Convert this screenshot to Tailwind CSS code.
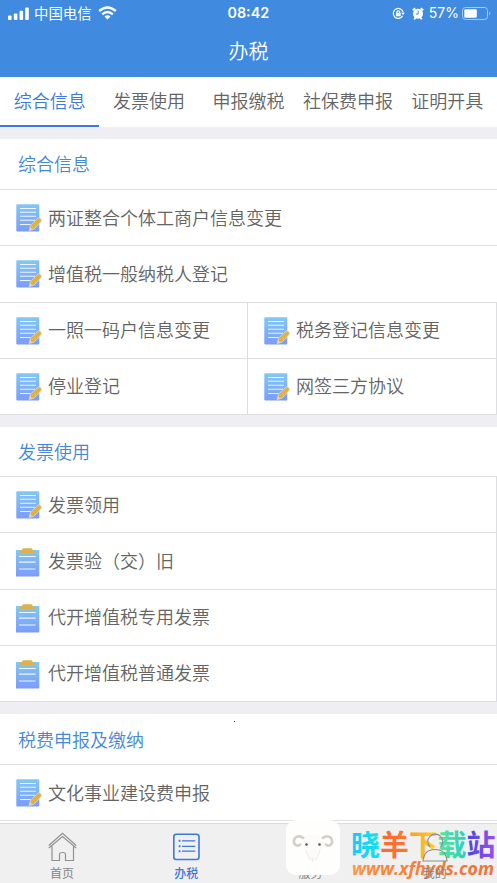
<!DOCTYPE html>
<html lang="zh-CN">
<head>
<meta charset="utf-8">
<title>办税</title>
<script src="https://cdn.jsdelivr.net/npm/@tailwindcss/browser@4"></script>
</head>
<body class="w-[497px] h-[883px] overflow-hidden bg-[#efeff3] font-['Noto_Sans_CJK_SC',sans-serif] font-[350] text-[#646464]">
<svg class="absolute w-0 h-0">
  <defs>
    <linearGradient id="paper" x1="0" y1="0" x2="0" y2="1"><stop offset="0" stop-color="#82c8f4"/><stop offset="1" stop-color="#7c9bfa"/></linearGradient>
    <symbol id="edit" viewBox="0 0 26 28">
      <rect x="0.3" y="0.3" width="23" height="27.2" rx="1" fill="url(#paper)"/>
      <path d="M4 4.500H20M4 8.200H20M4 12.200H20M4 16.200H19M4 20.500H14.500" stroke="#e9f5ff" stroke-width="1.100"/>
      <path d="M13.300 26.500L14.300 21.500L21.800 14.200Q23 13.300 24.700 14.500Q26 16 25 17.700L18 25Z" fill="#e3b13f" stroke="#d8e2ee" stroke-width=".7"/>
      <path d="M13.300 26.500l.7-3.200 2.600 2.200z" fill="#f4d692"/>
    </symbol>
    <symbol id="clip" viewBox="0 0 26 29">
      <path d="M0 2H23.300V28.500H0z" fill="url(#paper)"/>
      <path d="M3 8.500H19.500M3 14.200H19.500M3 21H19.500" stroke="#e9f5ff" stroke-width="1.200"/>
      <path d="M4 5.300V3.200Q4 2 5.500 2H6Q6.300.3 7.500.3H15Q16.300.3 16.700 2H17Q18.500 2 18.500 3.200V5.300z" fill="#dcb34b"/>
    </symbol>
  </defs>
</svg>

<header class="h-[77px] bg-[#408ae0] text-white flex flex-col">
  <div class="h-[26px] relative flex items-center justify-between pl-2 pr-1.5">
    <div class="flex items-center">
      <svg class="w-[21px] h-[13px]" viewBox="0 0 21 13" fill="#fff"><rect x="0" y="8.500" width="3.600" height="4.500" rx="1"/><rect x="5.800" y="6.500" width="3.600" height="6.500" rx="1"/><rect x="11.500" y="3.700" width="3.600" height="9.300" rx="1"/><rect x="17.200" y="0.500" width="3.600" height="12.500" rx="1"/></svg>
      <span class="ml-[5px] text-[14.400px] leading-[26px] font-normal">中国电信</span>
      <svg class="ml-[6px] w-[19px] h-[14px]" viewBox="0 0 19 14" fill="none" stroke="#fff" stroke-width="2.400"><path d="M1.200 5Q9.500-2.200 17.800 5"/><path d="M4.200 8.400Q9.500 3.700 14.800 8.400"/><path d="M6.500 10.500Q9.500 8 12.500 10.500L9.500 13.500z" fill="#fff" stroke="none"/></svg>
    </div>
    <span class="absolute left-[227.500px] top-0 leading-[26px] text-[14.300px] font-semibold font-[Inter,sans-serif]">08:42</span>
    <div class="flex items-center">
      <svg class="w-[13px] h-[13px]" viewBox="0 0 13 13" fill="none" stroke="#fff" stroke-width="1.200"><path d="M10.700 8.800A5 5 0 1 1 11.200 5.500"/><path d="M9.200 5.700h3.600l-1.800 2.400z" fill="#fff" stroke="none"/><rect x="3.900" y="5.700" width="4.800" height="3.600" rx=".4" fill="#fff" stroke="none"/><path d="M4.900 6V4.800Q6.300 2.700 7.700 4.800V6"/></svg>
      <svg class="ml-[7px] w-[12px] h-[13px]" viewBox="0 0 12 13" fill="none" stroke="#fff"><circle cx="6" cy="6.800" r="5" fill="#fff" stroke="none"/><path d="M.8 3.300L3.200 1.200M11.200 3.300L8.800 1.200M2.200 12.300l1.500-1.800M9.800 12.300l-1.500-1.800" stroke-width="1.800"/><path d="M6.200 3.800V7H3.800" stroke="#408ae0" stroke-width="1"/></svg>
      <span class="ml-[5px] leading-[26px] text-[14px] font-normal font-[Inter,sans-serif]">57%</span>
      <svg class="ml-[3px] w-[29px] h-[13px]" viewBox="0 0 29 13"><rect x=".5" y=".5" width="25" height="12" rx="3" fill="none" stroke="#a7cbf3"/><rect x="2.300" y="2.200" width="12.500" height="8.600" rx="1.300" fill="#fff"/><path d="M27.300 4.500Q29.300 6.500 27.300 8.500z" fill="#a7cbf3"/></svg>
    </div>
  </div>
  <h1 class="h-[51px] text-center text-[20px] leading-[49px]">办税</h1>
</header>

<nav class="h-[50px] bg-white grid grid-cols-5 text-center text-[18px] leading-[47px] whitespace-nowrap">
  <span class="text-[#3c78de] border-b-[2.500px] border-[#3c78de]">综合信息</span><span>发票使用</span><span>申报缴税</span><span>社保费申报</span><span>证明开具</span>
</nav>

<main class="h-[696px] overflow-hidden pt-3 text-[18px]">
  <section class="bg-white">
    <h2 class="h-[51px] border-b border-[#dedee1] pl-[18px] leading-[49px] text-[#4388dc]">综合信息</h2>
    <div class="grid grid-cols-[248px_1fr] auto-rows-[56.250px]">
      <div class="col-span-2 flex items-center gap-[6px] pl-4 border-b border-[#dedee1]"><svg class="w-[26px] h-7"><use href="#edit"/></svg><span class="leading-[54px] pb-0.5">两证整合个体工商户信息变更</span></div>
      <div class="col-span-2 flex items-center gap-[6px] pl-4 border-b border-[#dedee1]"><svg class="w-[26px] h-7"><use href="#edit"/></svg><span class="leading-[54px] pb-0.5">增值税一般纳税人登记</span></div>
      <div class="flex items-center gap-[6px] pl-4 border-b border-r border-[#dedee1]"><svg class="w-[26px] h-7 mt-px"><use href="#edit"/></svg><span class="leading-[54px] pb-0.5">一照一码户信息变更</span></div>
      <div class="flex items-center gap-[6px] pl-4 border-b border-r border-[#dedee1]"><svg class="w-[26px] h-7 mt-px"><use href="#edit"/></svg><span class="leading-[54px] pb-0.5">税务登记信息变更</span></div>
      <div class="flex items-center gap-[6px] pl-4 border-b border-r border-[#dedee1]"><svg class="w-[26px] h-7 mt-px"><use href="#edit"/></svg><span class="leading-[54px] pb-0.5">停业登记</span></div>
      <div class="flex items-center gap-[6px] pl-4 border-b border-r border-[#dedee1]"><svg class="w-[26px] h-7 mt-px"><use href="#edit"/></svg><span class="leading-[54px] pb-0.5">网签三方协议</span></div>
    </div>
  </section>
  <section class="mt-3 bg-white">
    <h2 class="h-[50px] border-b border-[#dedee1] pl-[18px] leading-[49px] text-[#4388dc]">发票使用</h2>
    <div class="grid auto-rows-[56.250px]">
      <div class="flex items-center gap-[6px] pl-4 border-b border-r border-[#dedee1]"><svg class="w-[26px] h-7 mt-px"><use href="#edit"/></svg><span class="leading-[54px] pb-0.5">发票领用</span></div>
      <div class="flex items-center gap-[6px] pl-4 border-b border-r border-[#dedee1]"><svg class="w-[26px] h-[29px] mt-[3px]"><use href="#clip"/></svg><span class="leading-[54px] pb-0.5">发票验（交）旧</span></div>
      <div class="flex items-center gap-[6px] pl-4 border-b border-r border-[#dedee1]"><svg class="w-[26px] h-[29px] mt-[3px]"><use href="#clip"/></svg><span class="leading-[54px] pb-0.5">代开增值税专用发票</span></div>
      <div class="flex items-center gap-[6px] pl-4 border-b border-r border-[#dedee1]"><svg class="w-[26px] h-[29px] mt-[3px]"><use href="#clip"/></svg><span class="leading-[54px] pb-0.5">代开增值税普通发票</span></div>
    </div>
  </section>
  <section class="mt-3 bg-white relative">
    <i class="absolute left-[234px] top-[7px] w-px h-px bg-[#333]"></i>
    <h2 class="h-[51px] border-b border-[#dedee1] pl-[18px] leading-[51px] text-[#4388dc]">税费申报及缴纳</h2>
    <div class="h-[56.250px] flex items-center gap-[6px] pl-4 border-b border-[#dedee1]"><svg class="w-[26px] h-7 mt-px"><use href="#edit"/></svg><span class="leading-[54px] pb-0.5">文化事业建设费申报</span></div>
    <div class="h-2"></div>
  </section>
</main>

<footer class="relative h-[60px] bg-[#f0f0f0] border-t border-[#dcdcdc] grid grid-cols-4 text-[12px] leading-[18px] font-normal text-[#858585]">
  <div class="flex flex-col items-center pt-[8px]">
    <svg class="w-[29px] h-[30px]" viewBox="0 0 29 30" fill="none" stroke="#929292" stroke-width="1.200"><path d="M.8 13.500L14.500 1.200L28.200 13.500M.8 16L14.500 4.500L28.200 16M4 14V28.500H11.500V22.500Q11.500 20.500 14.500 20.500Q17.500 20.500 17.500 22.500V28.500H25.500V14"/></svg>
    <span class="mt-[2px]">首页</span>
  </div>
  <div class="flex flex-col items-center pt-[8px] text-[#3c78de]">
    <svg class="w-[28px] h-[30px]" viewBox="0 0 28 30" fill="none" stroke="#3c78de" stroke-width="1.600"><rect x="1.800" y="2.300" width="25.200" height="25.200" rx="2.500"/><path d="M10 8.800H23.200M10 14.300H23.200M10 19.200H23.200" stroke-width="1.300"/><path d="M6.700 8.800H8.500M6.700 14.300H8.500M6.700 19.200H8.500" stroke-width="2"/></svg>
    <span class="mt-[2px] font-medium">办税</span>
  </div>
  <div class="flex flex-col items-center pt-[40px]"><span>服务</span></div>
  <div class="relative z-10 flex flex-col items-center pt-[8px]">
    <svg class="w-[28px] h-[30px]" viewBox="0 0 28 30" fill="none" stroke="#8d8d86" stroke-width="1.100"><path d="M9 15A7.500 7.500 0 1 1 19.500 15"/><path d="M2 29Q3 17.500 14 17.500Q25 17.500 26 29z"/></svg>
    <span class="mt-[2px]">我的</span>
  </div>

  <div class="absolute left-[286px] -top-[4px] w-[54px] h-[55px] rounded-[10px] bg-[#fefefd]">
    <svg class="w-full h-full" viewBox="0 0 54 55" fill="none">
      <path d="M17 17Q27 12 37 17L36 27Q34 40 27 43Q20 40 18 27z" fill="#fcfbf8"/>
      <path d="M18 18.500Q13 14.500 9 18Q6 23 10.500 25.500Q14 26 14.500 23.500" stroke="#d3d1c7" stroke-width="2.600"/>
      <path d="M36 18.500Q41 14.500 45 18Q48 23 43.500 25.500Q40 26 39.500 23.500" stroke="#d3d1c7" stroke-width="2.600"/>
      <circle cx="20.500" cy="24.500" r="1.300" fill="#55524e"/><circle cx="33.500" cy="24.500" r="1.300" fill="#55524e"/>
      <path d="M20 30Q21.500 36 24.500 40M34 30Q32.500 36 29.500 40M24.500 37L26.500 39L28.500 37M26.500 39V42" stroke="#ebe7e1" stroke-width=".8"/>
    </svg>
  </div>
  <svg class="absolute left-[346px] top-0 w-[151px] h-[59px]" viewBox="0 0 151 59">
    <defs>
      <linearGradient id="c1"><stop stop-color="#18c8f4"/><stop offset="1" stop-color="#13e4ed"/></linearGradient>
      <linearGradient id="c2"><stop stop-color="#ff6438"/><stop offset="1" stop-color="#fb7b28"/></linearGradient>
      <linearGradient id="c3"><stop stop-color="#ff9b28"/><stop offset="1" stop-color="#ffd522"/></linearGradient>
      <linearGradient id="c4"><stop stop-color="#57e99b"/><stop offset="1" stop-color="#27d1bf"/></linearGradient>
      <linearGradient id="c5"><stop stop-color="#4a46dc"/><stop offset="1" stop-color="#9a50ef"/></linearGradient>
      <linearGradient id="url" gradientUnits="userSpaceOnUse" x1="5" x2="149" y1="0" y2="0"><stop stop-color="#fb9a4c"/><stop offset=".15" stop-color="#fb883c"/><stop offset=".6" stop-color="#f77a36"/><stop offset="1" stop-color="#ee713b"/></linearGradient>
    </defs>
    <g font-family="Noto Sans CJK SC, sans-serif" font-size="29" font-weight="700">
      <text x="5" y="32.300" fill="url(#c1)">晓</text><text x="34" y="32.300" fill="url(#c2)">羊</text><text x="63" y="32.300" fill="url(#c3)">下</text><text x="91.500" y="32.300" fill="url(#c4)">载</text><text x="120.500" y="32.300" fill="url(#c5)">站</text>
    </g>
    <text x="6" y="50.800" font-family="Open Sans, sans-serif" font-size="18" font-weight="700" font-style="italic" textLength="142" lengthAdjust="spacingAndGlyphs" fill="url(#url)">www.xfhyds.com</text>
  </svg>
</footer>
</body>
</html>
